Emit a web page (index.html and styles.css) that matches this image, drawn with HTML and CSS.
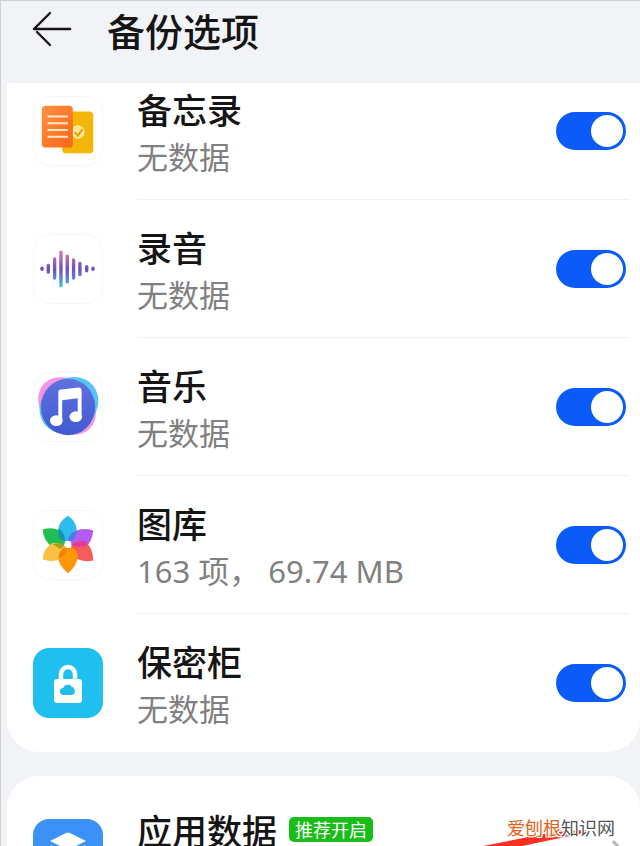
FILE: index.html
```html
<!DOCTYPE html>
<html lang="zh-CN">
<head>
    <meta charset="UTF-8">
    <meta name="viewport" content="width=device-width, initial-scale=1.0">
    <title>备份选项</title>
    <link rel="stylesheet" href="styles.css">
</head>
<body>
    <header class="header">
        <button type="button" class="back" aria-label="返回">
            <svg width="40" height="36" viewBox="0 0 40 36" fill="none" stroke="#151515" stroke-width="2.4" stroke-linecap="round" stroke-linejoin="round">
                <path d="M18 2 2 18M5 21l13 13M2 18h36"/>
            </svg>
        </button>
        <h1>备份选项</h1>
    </header>

    <main>
        <ul class="card system-apps">
            <li class="row">
                <svg class="icon" viewBox="0 0 70 70">
                    <defs>
                        <linearGradient id="memo" x1="0" y1="0" x2="1" y2="1">
                            <stop offset="0" stop-color="#ff9145"/>
                            <stop offset="1" stop-color="#fb6515"/>
                        </linearGradient>
                    </defs>
                    <rect x="29" y="15" width="32" height="43" rx="4" fill="#f3b507"/>
                    <circle cx="45" cy="36" r="7" fill="#ffe79a"/>
                    <path d="m42 36 3 4 5-7" fill="none" stroke="#dba006" stroke-width="2"/>
                    <rect x="8" y="9" width="32" height="43" rx="4" fill="url(#memo)"/>
                    <path d="M14 20h21M14 27h21M14 34h21M14 41h21" stroke="#ffe9c9" stroke-width="2"/>
                </svg>
                <div class="content">
                    <div class="text">
                        <label class="title" for="memoSwitch">备忘录</label>
                        <p class="detail">无数据</p>
                    </div>
                    <input type="checkbox" class="switch" id="memoSwitch" checked>
                </div>
            </li>
            <li class="row">
                <svg class="icon" viewBox="0 0 70 70">
                    <defs>
                        <linearGradient id="wave" gradientUnits="userSpaceOnUse" x1="0" y1="16" x2="0" y2="54">
                            <stop offset="0" stop-color="#e27da0"/>
                            <stop offset=".5" stop-color="#6b50bd"/>
                            <stop offset=".75" stop-color="#5f80dc"/>
                            <stop offset="1" stop-color="#42cbe0"/>
                        </linearGradient>
                    </defs>
                    <g fill="url(#wave)">
                        <rect x="6.5" y="32.5" width="3.5" height="4.5" rx="1.7"/>
                        <rect x="13" y="29.5" width="3.5" height="10.5" rx="1.7"/>
                        <rect x="19.5" y="23" width="3.5" height="23" rx="1.7"/>
                        <rect x="26" y="16" width="3.5" height="38" rx="1.7"/>
                        <rect x="32.5" y="20" width="3.5" height="30" rx="1.7"/>
                        <rect x="39" y="24" width="3.5" height="22" rx="1.7"/>
                        <rect x="45.5" y="27.5" width="3.5" height="15" rx="1.7"/>
                        <rect x="52.5" y="31" width="3.5" height="7.5" rx="1.7"/>
                        <rect x="59" y="32.5" width="3.5" height="4.5" rx="1.7"/>
                    </g>
                </svg>
                <div class="content">
                    <div class="text">
                        <label class="title" for="recordSwitch">录音</label>
                        <p class="detail">无数据</p>
                    </div>
                    <input type="checkbox" class="switch" id="recordSwitch" checked>
                </div>
            </li>
            <li class="row">
                <svg class="icon" viewBox="0 0 70 70">
                    <defs>
                        <linearGradient id="music" x1="0" y1="0" x2="0" y2="1">
                            <stop offset="0" stop-color="#6270df"/>
                            <stop offset="1" stop-color="#3f5bd2"/>
                        </linearGradient>
                    </defs>
                    <ellipse cx="34" cy="34" rx="26" ry="33" fill="#f296e2" transform="rotate(-45 34 34)"/>
                    <ellipse cx="36" cy="33" rx="27" ry="32" fill="#54c5f5" transform="rotate(52 36 33)"/>
                    <ellipse cx="35" cy="35" rx="28" ry="29" fill="url(#music)"/>
                    <g fill="#fff">
                        <path d="M25 20q0-3 3-3l18-2q3 0 3 3v26h-4V26l-16 2v21h-4z"/>
                        <ellipse cx="23" cy="49" rx="6.5" ry="5.5"/>
                        <ellipse cx="43" cy="45" rx="6.5" ry="5.5"/>
                    </g>
                </svg>
                <div class="content">
                    <div class="text">
                        <label class="title" for="musicSwitch">音乐</label>
                        <p class="detail">无数据</p>
                    </div>
                    <input type="checkbox" class="switch" id="musicSwitch" checked>
                </div>
            </li>
            <li class="row">
                <svg class="icon" viewBox="0 0 70 70">
                    <path d="M9 19q10-3 17 1 6 4 6 13l-4 7h-6Q9 31 9 19z" fill="#21bd51"/>
                    <path d="M35 5q9 6 9 15 0 8-5 12h-8q-6-5-6-12 0-9 10-15z" fill="#2cbdec"/>
                    <path d="M61 20q-1 12-9 18-8 1-14-3l-3-6q1-6 9-9 8-3 17 0z" fill="#b45cf1"/>
                    <path d="M61 51q0-13-9-20-8-1-13 4l-2 6q3 7 9 9 7 3 15 1z" fill="#f75c5c"/>
                    <path d="M35 64q10-8 10-18 0-4-5-8H30q-5 4-5 9 0 9 10 17z" fill="#fd9707"/>
                    <path d="M9 50q0-11 10-17 8-1 15 4-1 10-8 13-8 3-17 0z" fill="#fac044"/>
                    <path d="M25 18q7 4 7 13-5-1-7-5z" fill="#1595a9"/>
                    <path d="M35 30q1-7 9-10 0 6-5 11z" fill="#477fe9"/>
                    <path d="M25 50q0-8 5-12h4q0 8-9 12z" fill="#ed8509"/>
                    <path d="m19 34 10-1 2 3-4 3z" fill="#a5a020"/>
                    <path d="M38 35q7-5 15-4l2 4q-8 4-17 0z" fill="#df3e90"/>
                    <circle cx="35" cy="34" r="3.5" fill="#fff"/>
                </svg>
                <div class="content">
                    <div class="text">
                        <label class="title" for="gallerySwitch">图库</label>
                        <p class="detail">163 项， 69.74 MB</p>
                    </div>
                    <input type="checkbox" class="switch" id="gallerySwitch" checked>
                </div>
            </li>
            <li class="row">
                <svg class="icon icon-safe" viewBox="0 0 70 70">
                    <path d="M28 34V26a7 7 0 0 1 14 0v8" fill="none" stroke="#fff" stroke-width="4.5"/>
                    <rect x="21" y="31" width="28" height="24" rx="3" fill="#fff"/>
                    <path d="M31 47a3.5 3.5 0 0 1-1-7 5 5 0 0 1 9-1q2 0 2 2 1 1 1 3t-3 3z" fill="#20bde9"/>
                </svg>
                <div class="content">
                    <div class="text">
                        <label class="title" for="safeSwitch">保密柜</label>
                        <p class="detail">无数据</p>
                    </div>
                    <input type="checkbox" class="switch" id="safeSwitch" checked>
                </div>
            </li>
        </ul>

        <div class="card app-data">
            <a href="#" class="row">
                <svg class="icon icon-data" viewBox="0 0 70 70">
                    <path d="m17 22 16-8q2-1 4 0l16 8-16 8q-2 1-4 0z" fill="#fff"/>
                    <path d="m17 28 16 8q2 1 4 0l16-8M17 38l16 8q2 1 4 0l16-8" fill="none" stroke="#c5e0ff" stroke-width="4"/>
                </svg>
                <div class="content">
                    <span class="title">应用数据</span>
                    <span class="badge">推荐开启</span>
                    <svg class="chevron" width="14" height="26" viewBox="0 0 14 26" fill="none" stroke="#b5b5b5" stroke-width="3">
                        <path d="m1 1 11 12L1 25"/>
                    </svg>
                </div>
            </a>
        </div>
    </main>

    <svg class="pointer" width="120" height="16" viewBox="0 0 120 16">
        <path d="M3 16 74 2l32-2-2 3-62 13z" fill="#fb2e22"/>
    </svg>
    <div class="watermark"><span>爱刨根</span>知识网</div>
</body>
</html>
```

FILE: styles.css
```css
:root {
    --page-bg: #f1f3f6;
    --text: #151515;
    --text-muted: #808080;
    --line: #f1f1f1;
    --blue: #0a5bf8;
    --green: #18bd18;
}

* {
    margin: 0;
    padding: 0;
    box-sizing: border-box;
}

body {
    height: 100vh;
    overflow: hidden;
    position: relative;
    background-color: var(--page-bg);
    color: var(--text);
    font-family: "Noto Sans CJK SC", sans-serif;
    border-top: 1px solid #cfd0d2;
    border-left: 1px solid #cfd0d2;
}

/* The list is scrolled a little way under the header */
.header {
    position: relative;
    z-index: 1;
    display: flex;
    align-items: flex-start;
    gap: 35px;
    height: 82px;
    padding: 3px 31px;
    background-color: var(--page-bg);
}

.header h1 {
    font-size: 38px;
    font-weight: 500;
    line-height: 52px;
}

.back {
    height: 50px;
    border: none;
    background: none;
    cursor: pointer;
}

.back svg {
    display: block;
}

.card {
    margin-left: 6px;
    background-color: #fff;
    border-radius: 32px;
    list-style: none;
}

.system-apps {
    margin-top: -21px;
    margin-bottom: 24px;
    border-top-left-radius: 0;
    border-top-right-radius: 0;
}

.row {
    display: flex;
    align-items: center;
    gap: 34px;
    padding-left: 26px;
    color: inherit;
    text-decoration: none;
}

.icon {
    flex: none;
    width: 70px;
    height: 70px;
    border: 1px solid #f7f7f7;
    border-radius: 16px;
}

.icon-safe {
    border: none;
    background-color: #1fc0ef;
}

.icon-data {
    border: none;
    background-color: #3c91f6;
}

.content {
    flex: 1;
    display: flex;
    align-items: center;
    height: 138px;
    margin-right: 11px;
    padding-right: 3px;
}

.row .content {
    border-bottom: 1px solid var(--line);
}

.row:last-child .content {
    border-bottom: none;
}

.text {
    flex: 1;
    padding-top: 4px;
}

.title {
    display: block;
    font-size: 35px;
    font-weight: 500;
    line-height: 48px;
}

.detail {
    color: var(--text-muted);
    font-family: "Noto Sans", "Noto Sans CJK SC", sans-serif;
    font-size: 31px;
    line-height: 48px;
}

.switch {
    appearance: none;
    width: 70px;
    height: 38px;
    padding: 3px;
    border-radius: 19px;
    background-color: #d5d5d5;
    cursor: pointer;
}

.switch::before {
    content: "";
    display: block;
    width: 32px;
    height: 32px;
    border-radius: 50%;
    background-color: #fff;
}

.switch:checked {
    background-color: var(--blue);
}

.switch:checked::before {
    margin-left: auto;
}

.app-data {
    padding-top: 8px;
}

.app-data .content {
    height: 140px;
    align-items: flex-start;
    padding-top: 22px;
}

.badge {
    margin-top: 11px;
    margin-left: 12px;
    padding: 0 6px;
    border-radius: 5px;
    background-color: var(--green);
    color: #fff;
    font-size: 18px;
    line-height: 25px;
}

.chevron {
    margin-top: 34px;
    margin-left: auto;
}

.pointer {
    position: absolute;
    right: 40px;
    bottom: 0;
}

.watermark {
    position: absolute;
    right: 25px;
    bottom: 6px;
    font-size: 18px;
    line-height: 26px;
    color: #555;
    text-shadow: 0 0 2px #fff, 1px 1px 0 #fff, -1px -1px 0 #fff, 1px -1px 0 #fff, -1px 1px 0 #fff;
}

.watermark span {
    color: #e0641c;
}
```
